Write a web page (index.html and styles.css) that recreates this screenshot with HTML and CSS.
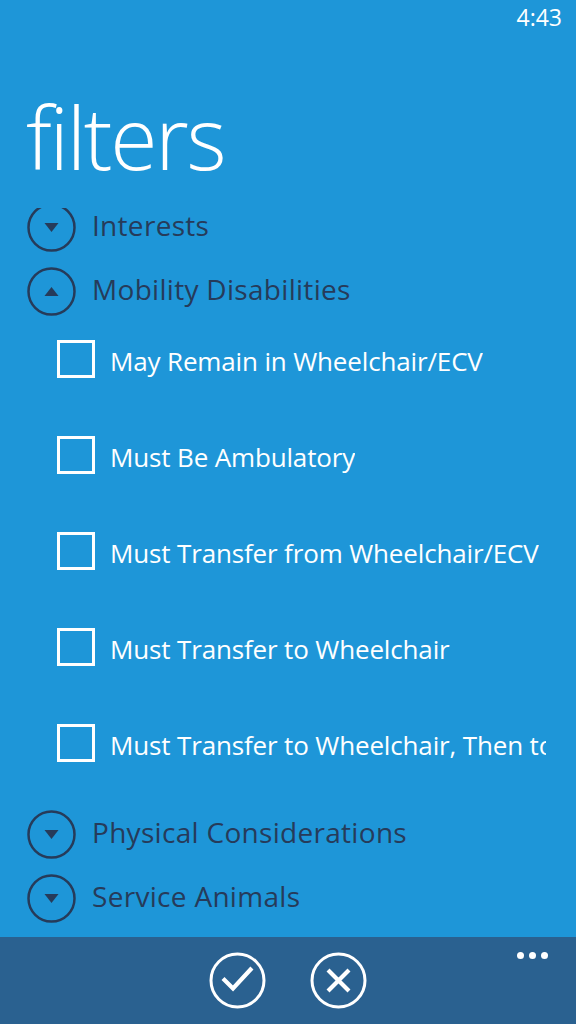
FILE: index.html
```html
<!DOCTYPE html>
<html>
<head>
    <title>filters</title>
    <link rel="stylesheet" href="styles.css">
</head>
<body>
    <div class="phone">
        <div class="status-bar">
            <span class="clock">4:43</span>
        </div>

        <h1 class="page-title">filters</h1>

        <div class="filter-list">
            <div class="filter-scroll">
                <!-- collapsed group -->
                <div class="group-head">
                    <svg class="expander" width="49" height="49" viewBox="0 0 49 49">
                        <circle cx="24.5" cy="24.5" r="23" fill="none" stroke="#263b5a" stroke-width="2.5"/>
                        <polygon points="17.5,20 31.5,20 24.5,29" fill="#263b5a"/>
                    </svg>
                    <span class="group-name">Interests</span>
                </div>

                <!-- expanded group -->
                <div class="group-head">
                    <svg class="expander" width="49" height="49" viewBox="0 0 49 49">
                        <circle cx="24.5" cy="24.5" r="23" fill="none" stroke="#263b5a" stroke-width="2.5"/>
                        <polygon points="17.5,29 31.5,29 24.5,20" fill="#263b5a"/>
                    </svg>
                    <span class="group-name">Mobility Disabilities</span>
                </div>
                <div class="group-items">
                    <label class="check-row">
                        <span class="check-box"></span>
                        <span class="check-label">May Remain in Wheelchair/ECV</span>
                    </label>
                    <label class="check-row">
                        <span class="check-box"></span>
                        <span class="check-label">Must Be Ambulatory</span>
                    </label>
                    <label class="check-row">
                        <span class="check-box"></span>
                        <span class="check-label">Must Transfer from Wheelchair/ECV</span>
                    </label>
                    <label class="check-row">
                        <span class="check-box"></span>
                        <span class="check-label">Must Transfer to Wheelchair</span>
                    </label>
                    <label class="check-row">
                        <span class="check-box"></span>
                        <span class="check-label">Must Transfer to Wheelchair, Then to</span>
                    </label>
                </div>

                <div class="group-head">
                    <svg class="expander" width="49" height="49" viewBox="0 0 49 49">
                        <circle cx="24.5" cy="24.5" r="23" fill="none" stroke="#263b5a" stroke-width="2.5"/>
                        <polygon points="17.5,20 31.5,20 24.5,29" fill="#263b5a"/>
                    </svg>
                    <span class="group-name">Physical Considerations</span>
                </div>
                <div class="group-head">
                    <svg class="expander" width="49" height="49" viewBox="0 0 49 49">
                        <circle cx="24.5" cy="24.5" r="23" fill="none" stroke="#263b5a" stroke-width="2.5"/>
                        <polygon points="17.5,20 31.5,20 24.5,29" fill="#263b5a"/>
                    </svg>
                    <span class="group-name">Service Animals</span>
                </div>
            </div>
        </div>

        <!-- Application bar -->
        <div class="app-bar">
            <button class="app-button" title="apply">
                <svg width="57" height="57" viewBox="0 0 57 57">
                    <circle cx="28.5" cy="28.5" r="26.5" fill="none" stroke="#fff" stroke-width="3"/>
                    <path d="M15.5 28 L24 36.5 L41.5 17.5" fill="none" stroke="#fff" stroke-width="4.2" stroke-linecap="square"/>
                </svg>
            </button>
            <button class="app-button" title="cancel">
                <svg width="57" height="57" viewBox="0 0 57 57">
                    <circle cx="28.5" cy="28.5" r="26.5" fill="none" stroke="#fff" stroke-width="3"/>
                    <path d="M19.5 19.5 L37.5 37.5 M37.5 19.5 L19.5 37.5" fill="none" stroke="#fff" stroke-width="4.2" stroke-linecap="square"/>
                </svg>
            </button>
            <div class="more-dots">
                <span></span><span></span><span></span>
            </div>
        </div>
    </div>
</body>
</html>
```

FILE: styles.css
```css
body {
    margin: 0;
    background-color: #1e96d8;
    font-family: "Open Sans", "Noto Sans", sans-serif;
}

.phone {
    width: 576px;
    height: 1024px;
    display: flex;
    flex-direction: column;
    overflow: hidden;
}

/* Status bar */
.status-bar {
    height: 40px;
    display: flex;
    justify-content: flex-end;
    padding: 6px 14px 0 0;
    box-sizing: border-box;
}

.clock {
    color: #fff;
    font-size: 23px;
    line-height: 1;
}

/* Title */
.page-title {
    margin: 0;
    height: 168px;
    padding: 54px 0 0 26px;
    box-sizing: border-box;
    color: #fff;
    font-size: 86px;
    font-weight: 300;
    line-height: 1;
    letter-spacing: -2.3px;
}

/* Filter list */
.filter-list {
    flex: 1;
    overflow: hidden;
    padding-right: 30px;
}

.filter-scroll {
    margin-top: -12px;
}

.group-head {
    height: 63px;
    display: flex;
    align-items: center;
    padding-left: 27px;
}

.group-head + .group-head {
    height: 64px;
}

.expander {
    flex-shrink: 0;
}

.group-name {
    margin-left: 16px;
    padding-bottom: 5px;
    color: #263b5a;
    font-size: 28px;
    line-height: 32px;
    letter-spacing: 0.3px;
    white-space: nowrap;
}

.check-row {
    height: 96px;
    display: flex;
    align-items: flex-start;
    padding: 17px 0 0 57px;
    box-sizing: border-box;
}

.check-box {
    flex-shrink: 0;
    width: 38px;
    height: 38px;
    border: 3px solid #fff;
    box-sizing: border-box;
}

.check-label {
    margin-left: 15px;
    padding-top: 3px;
    color: #fff;
    font-size: 26px;
    letter-spacing: -0.15px;
    white-space: nowrap;
    overflow: hidden;
}

/* Application bar */
.app-bar {
    height: 87px;
    flex-shrink: 0;
    position: relative;
    display: flex;
    justify-content: center;
    align-items: flex-start;
    gap: 44px;
    padding-top: 15px;
    box-sizing: border-box;
    background-color: #2a6190;
}

.app-button {
    width: 57px;
    height: 57px;
    padding: 0;
    border: none;
    background: none;
    cursor: pointer;
}

.app-button svg {
    display: block;
}

.more-dots {
    position: absolute;
    top: 15px;
    right: 28px;
    display: flex;
    gap: 5px;
}

.more-dots span {
    width: 7px;
    height: 7px;
    border-radius: 50%;
    background-color: #fff;
}
```
